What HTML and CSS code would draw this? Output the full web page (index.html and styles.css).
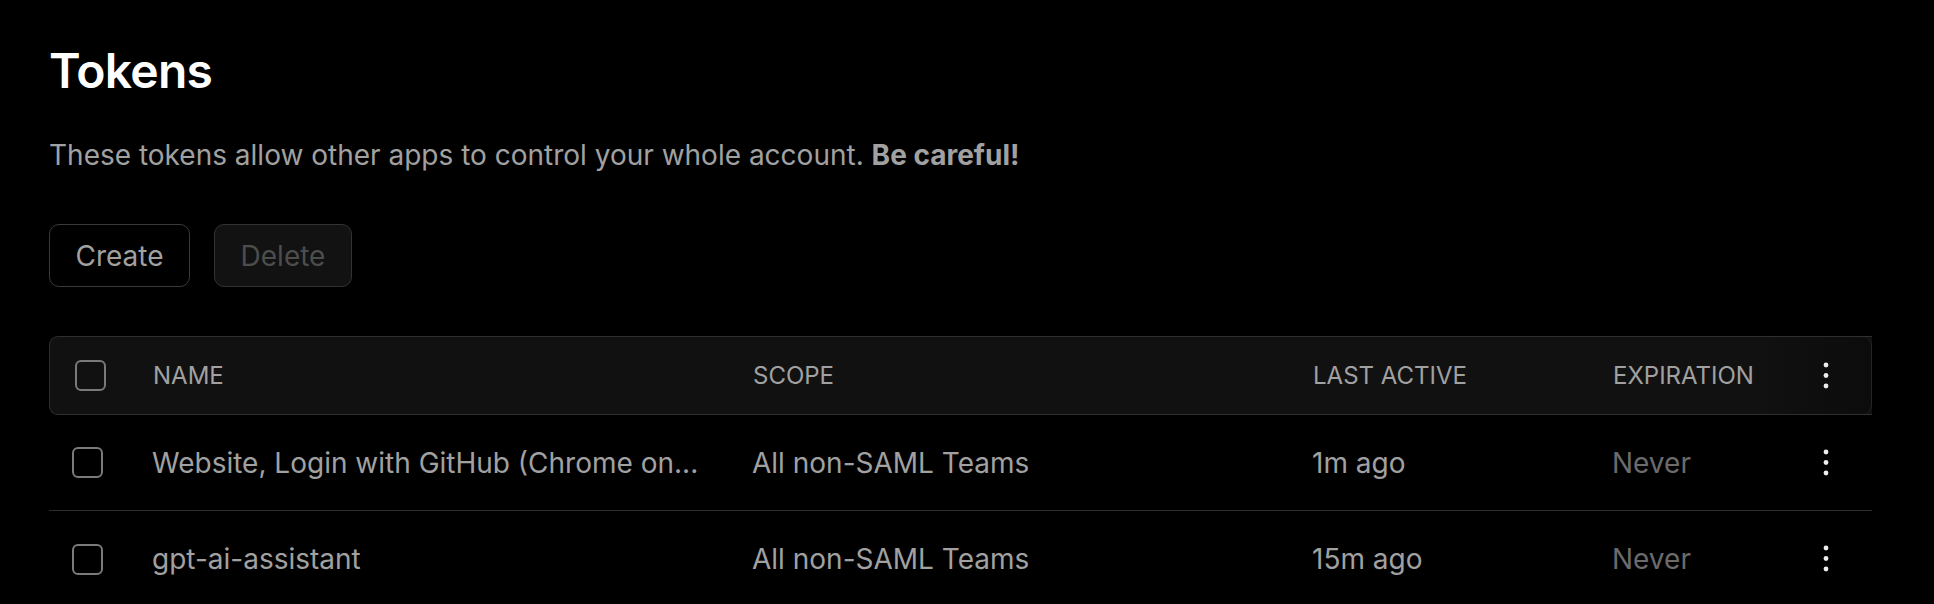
FILE: index.html
```html
<!DOCTYPE html>
<html lang="en">
<head>
<meta charset="utf-8">
<title>Tokens</title>
<link rel="stylesheet" href="styles.css">
</head>
<body>
<main class="page">
  <h1 class="title">Tokens</h1>
  <p class="desc">These tokens allow other apps to control your whole account. <strong>Be careful!</strong></p>
  <div class="actions">
    <button class="btn">Create</button>
    <button class="btn btn-disabled" disabled>Delete</button>
  </div>
  <div class="table">
    <div class="row head">
      <span class="check head-check"></span>
      <span class="cell">NAME</span>
      <span class="cell">SCOPE</span>
      <span class="cell">LAST ACTIVE</span>
      <span class="cell">EXPIRATION</span>
      <span class="menu head-menu">
        <svg width="8" height="30" viewBox="0 0 8 30"><circle cx="4" cy="4" r="2.4"/><circle cx="4" cy="14.5" r="2.4"/><circle cx="4" cy="25" r="2.4"/></svg>
      </span>
    </div>
    <div class="row body-row divided">
      <span class="check"></span>
      <span class="cell">Website, Login with GitHub (Chrome on...</span>
      <span class="cell">All non-SAML Teams</span>
      <span class="cell">1m ago</span>
      <span class="cell muted">Never</span>
      <span class="menu">
        <svg width="8" height="30" viewBox="0 0 8 30"><circle cx="4" cy="4" r="2.4"/><circle cx="4" cy="14.5" r="2.4"/><circle cx="4" cy="25" r="2.4"/></svg>
      </span>
    </div>
    <div class="row body-row">
      <span class="check"></span>
      <span class="cell">gpt-ai-assistant</span>
      <span class="cell">All non-SAML Teams</span>
      <span class="cell">15m ago</span>
      <span class="cell muted">Never</span>
      <span class="menu">
        <svg width="8" height="30" viewBox="0 0 8 30"><circle cx="4" cy="4" r="2.4"/><circle cx="4" cy="14.5" r="2.4"/><circle cx="4" cy="25" r="2.4"/></svg>
      </span>
    </div>
  </div>
</main>
</body>
</html>
```

FILE: styles.css
```css
html, body {
  margin: 0;
  padding: 0;
  background: #000;
}
body {
  font-family: Inter, "Noto Sans", sans-serif;
  color: #a1a1a1;
}
.page {
  padding: 43px 62px 0 49px;
}
.title {
  margin: 0;
  font-size: 48px;
  line-height: 56px;
  font-weight: 600;
  color: #fff;
  letter-spacing: -0.015em;
}
.desc {
  margin: 38px 0 0;
  font-size: 28px;
  line-height: 36px;
  color: #a1a1a1;
}
.desc strong {
  font-weight: 700;
}
.actions {
  display: flex;
  gap: 24px;
  margin-top: 51px;
}
.btn {
  height: 63px;
  padding: 0 20px;
  min-width: 141px;
  border: 1.5px solid #3a3a3a;
  border-radius: 10px;
  background: #000;
  color: #a1a1a1;
  font-family: Inter, "Noto Sans", sans-serif;
  font-size: 28px;
  font-weight: 400;
}
.btn-disabled {
  min-width: 138px;
  background: #121212;
  color: #4d4d4d;
  border-color: #333;
}
.table {
  margin-top: 49px;
  width: 1823px;
  overflow: hidden;
}
.row {
  display: grid;
  grid-template-columns: 80px 600px 560px 300px 184px 60px;
  align-items: center;
  padding-left: 23px;
  box-sizing: border-box;
}
.head {
  height: 79px;
  background: #111;
  border: 1.5px solid #2f2f2f;
  border-right: none;
  border-radius: 9px 0 0 9px;
  font-size: 24px;
  color: #a1a1a1;
  position: relative;
}
.head::after {
  content: "";
  position: absolute;
  top: 0;
  right: 0;
  bottom: 0;
  width: 120px;
  border-right: 1.5px solid #262626;
  border-radius: 0 9px 9px 0;
  background: linear-gradient(to right, rgba(17,17,17,0), #0c0c0c);
  pointer-events: none;
}
.body-row {
  height: 96px;
  font-size: 28px;
  color: #a1a1a1;
}
.divided {
  border-bottom: 1.5px solid #2e2e2e;
}
.check {
  width: 31px;
  height: 31px;
  box-sizing: border-box;
  border: 2px solid #7a7a7a;
  border-radius: 6px;
}
.head-check {
  margin-left: 2px;
}
.cell {
  white-space: nowrap;
}
.muted {
  color: #6b6b6b;
}
.menu {
  display: flex;
  justify-content: center;
  fill: #ededed;
  position: relative;
  z-index: 1;
}
.head-menu {
  margin-left: -2px;
}
```
